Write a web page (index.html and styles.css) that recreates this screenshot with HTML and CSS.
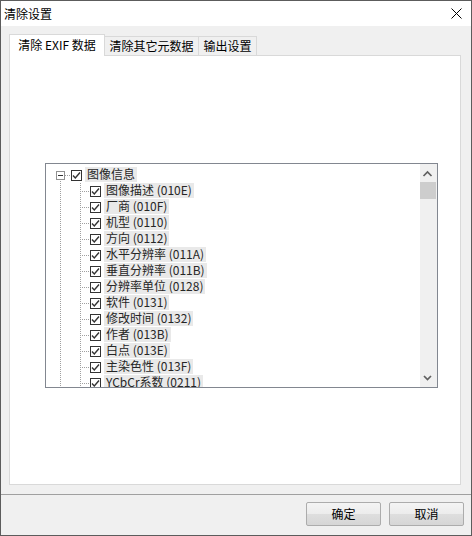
FILE: index.html
```html
<!DOCTYPE html>
<html lang="zh-CN">
<head>
<meta charset="utf-8">
<title>清除设置</title>
<link rel="stylesheet" href="styles.css">
</head>
<body>
<div class="window">
  <div class="titlebar">
    <span class="title">清除设置</span>
    <svg class="close" width="11" height="11" viewBox="0 0 11 11"><path d="M0.5 0.5 L10.5 10.5 M10.5 0.5 L0.5 10.5" stroke="#000" stroke-width="1" fill="none"/></svg>
  </div>
  <div class="body">
    <div class="tabs">
      <div class="tab active">清除 EXIF 数据</div>
      <div class="tab tab2">清除其它元数据</div>
      <div class="tab tab3">输出设置</div>
    </div>
    <div class="panel">
      <div class="tree">
        <div class="tree-list">
          <div class="row root">
            <span class="lead-root"><span class="expander"></span></span>
            <span class="cb"><svg width="9" height="9" viewBox="0 0 9 9"><path d="M1 4.5 L3.3 7 L8 1.5" stroke="#333" stroke-width="1.4" fill="none"/></svg></span>
            <span class="lbl">图像信息</span>
          </div>
          <div class="row child"><span class="lead"></span><span class="cb"><svg width="9" height="9" viewBox="0 0 9 9"><path d="M1 4.5 L3.3 7 L8 1.5" stroke="#333" stroke-width="1.4" fill="none"/></svg></span><span class="lbl">图像描述 (010E)</span></div>
          <div class="row child"><span class="lead"></span><span class="cb"><svg width="9" height="9" viewBox="0 0 9 9"><path d="M1 4.5 L3.3 7 L8 1.5" stroke="#333" stroke-width="1.4" fill="none"/></svg></span><span class="lbl">厂商 (010F)</span></div>
          <div class="row child"><span class="lead"></span><span class="cb"><svg width="9" height="9" viewBox="0 0 9 9"><path d="M1 4.5 L3.3 7 L8 1.5" stroke="#333" stroke-width="1.4" fill="none"/></svg></span><span class="lbl">机型 (0110)</span></div>
          <div class="row child"><span class="lead"></span><span class="cb"><svg width="9" height="9" viewBox="0 0 9 9"><path d="M1 4.5 L3.3 7 L8 1.5" stroke="#333" stroke-width="1.4" fill="none"/></svg></span><span class="lbl">方向 (0112)</span></div>
          <div class="row child"><span class="lead"></span><span class="cb"><svg width="9" height="9" viewBox="0 0 9 9"><path d="M1 4.5 L3.3 7 L8 1.5" stroke="#333" stroke-width="1.4" fill="none"/></svg></span><span class="lbl">水平分辨率 (011A)</span></div>
          <div class="row child"><span class="lead"></span><span class="cb"><svg width="9" height="9" viewBox="0 0 9 9"><path d="M1 4.5 L3.3 7 L8 1.5" stroke="#333" stroke-width="1.4" fill="none"/></svg></span><span class="lbl">垂直分辨率 (011B)</span></div>
          <div class="row child"><span class="lead"></span><span class="cb"><svg width="9" height="9" viewBox="0 0 9 9"><path d="M1 4.5 L3.3 7 L8 1.5" stroke="#333" stroke-width="1.4" fill="none"/></svg></span><span class="lbl">分辨率单位 (0128)</span></div>
          <div class="row child"><span class="lead"></span><span class="cb"><svg width="9" height="9" viewBox="0 0 9 9"><path d="M1 4.5 L3.3 7 L8 1.5" stroke="#333" stroke-width="1.4" fill="none"/></svg></span><span class="lbl">软件 (0131)</span></div>
          <div class="row child"><span class="lead"></span><span class="cb"><svg width="9" height="9" viewBox="0 0 9 9"><path d="M1 4.5 L3.3 7 L8 1.5" stroke="#333" stroke-width="1.4" fill="none"/></svg></span><span class="lbl">修改时间 (0132)</span></div>
          <div class="row child"><span class="lead"></span><span class="cb"><svg width="9" height="9" viewBox="0 0 9 9"><path d="M1 4.5 L3.3 7 L8 1.5" stroke="#333" stroke-width="1.4" fill="none"/></svg></span><span class="lbl">作者 (013B)</span></div>
          <div class="row child"><span class="lead"></span><span class="cb"><svg width="9" height="9" viewBox="0 0 9 9"><path d="M1 4.5 L3.3 7 L8 1.5" stroke="#333" stroke-width="1.4" fill="none"/></svg></span><span class="lbl">白点 (013E)</span></div>
          <div class="row child"><span class="lead"></span><span class="cb"><svg width="9" height="9" viewBox="0 0 9 9"><path d="M1 4.5 L3.3 7 L8 1.5" stroke="#333" stroke-width="1.4" fill="none"/></svg></span><span class="lbl">主染色性 (013F)</span></div>
          <div class="row child"><span class="lead"></span><span class="cb"><svg width="9" height="9" viewBox="0 0 9 9"><path d="M1 4.5 L3.3 7 L8 1.5" stroke="#333" stroke-width="1.4" fill="none"/></svg></span><span class="lbl">YCbCr系数 (0211)</span></div>
        </div>
        <div class="vscroll">
          <div class="sbtn"><svg width="17" height="17" viewBox="0 0 17 17"><path d="M3.5 12 L7.5 8 L11.5 12" stroke="#606060" stroke-width="1.7" fill="none"/></svg></div>
          <div class="thumb"></div>
          <div class="track"></div>
          <div class="sbtn"><svg width="17" height="17" viewBox="0 0 17 17"><path d="M4 6 L7.5 9.5 L11 6" stroke="#606060" stroke-width="1.7" fill="none"/></svg></div>
        </div>
      </div>
    </div>
  </div>
  <div class="footer">
    <button class="btn">确定</button>
    <button class="btn">取消</button>
  </div>
</div>
</body>
</html>
```

FILE: styles.css
```css
* { box-sizing: border-box; }
html, body { margin: 0; padding: 0; background: #ffffff; }
body {
  font-family: "Noto Sans CJK SC", "Noto Sans", sans-serif;
  font-size: 12px;
  color: #000;
}
.window {
  width: 472px;
  height: 536px;
  border: 1px solid #5c5c5c;
  display: flex;
  flex-direction: column;
  background: #f0f0f0;
}
.titlebar {
  height: 25px;
  flex: none;
  background: #ffffff;
  display: flex;
  align-items: center;
  justify-content: space-between;
  padding: 0 9px 0 3px;
}
.title { line-height: 16px; }
.close { display: block; }
.body {
  height: 468px;
  flex: none;
  padding: 8px 10px 9px 8px;
  display: flex;
  flex-direction: column;
}
.tabs {
  height: 21px;
  display: flex;
  align-items: flex-end;
  flex: none;
}
.tab {
  height: 19px;
  border: 1px solid #d9d9d9;
  border-bottom: none;
  background: #f0f0f0;
  text-align: center;
  line-height: 18px;
  white-space: nowrap;
}
.tab.active {
  width: 96px;
  height: 22px;
  margin-bottom: -1px;
  background: #ffffff;
  position: relative;
  z-index: 1;
  line-height: 20px;
}
.tab2 { width: 95px; margin-left: -1px; }
.tab3 { width: 59px; margin-left: -1px; }
.panel {
  height: 430px;
  flex: none;
  border: 1px solid #d9d9d9;
  background: #ffffff;
  padding: 107px 0 0 35px;
}
.tree {
  width: 393px;
  height: 225px;
  border: 1px solid #828790;
  display: flex;
  background: #fff;
}
.tree-list {
  flex: 1;
  overflow: hidden;
  padding-top: 3px;
}
.row {
  height: 16px;
  display: flex;
  align-items: flex-start;
  color: #262626;
}
.lead-root {
  width: 25px;
  height: 16px;
  flex: none;
  position: relative;
  background:
    repeating-linear-gradient(to right, #a0a0a0 0 1px, transparent 1px 2px) 19px 8px / 6px 1px no-repeat,
    repeating-linear-gradient(to bottom, #a0a0a0 0 1px, transparent 1px 2px) 14px 14px / 1px 2px no-repeat;
}
.expander {
  position: absolute;
  left: 10px;
  top: 4px;
  width: 9px;
  height: 9px;
  border: 1px solid #919191;
  background: #fff;
}
.expander::after {
  content: "";
  position: absolute;
  left: 1px;
  top: 3px;
  width: 5px;
  height: 1px;
  background: #333;
}
.lead {
  width: 44px;
  height: 16px;
  flex: none;
  background:
    repeating-linear-gradient(to bottom, #a0a0a0 0 1px, transparent 1px 2px) 14px 0 / 1px 16px no-repeat,
    repeating-linear-gradient(to bottom, #a0a0a0 0 1px, transparent 1px 2px) 34px 0 / 1px 16px no-repeat,
    repeating-linear-gradient(to right, #a0a0a0 0 1px, transparent 1px 2px) 36px 8px / 8px 1px no-repeat;
}
.cb {
  width: 11px;
  height: 11px;
  margin-top: 3px;
  flex: none;
  border: 1px solid #333;
  background: #fff;
  display: flex;
  align-items: center;
  justify-content: center;
}
.cb svg { display: block; }
.lbl {
  margin-left: 3px;
  height: 15px;
  line-height: 13px;
  padding: 0 2px;
  background: #e9e9e9;
  white-space: nowrap;
}
.vscroll {
  width: 17px;
  flex: none;
  background: #f0f0f0;
  display: flex;
  flex-direction: column;
}
.sbtn { height: 17px; flex: none; }
.sbtn svg { display: block; }
.thumb {
  height: 17px;
  margin: 1px 1px 0 0;
  background: #cdcdcd;
  flex: none;
}
.track { flex: 1; }
.footer {
  flex: 1;
  border-top: 1px solid #a0a0a0;
  background: #f0f0f0;
  display: flex;
  justify-content: flex-end;
  align-items: flex-start;
  gap: 8px;
  padding: 7px 7px 0 0;
}
.btn {
  width: 75px;
  height: 24px;
  border: 1px solid #acacac;
  border-radius: 2px;
  background: linear-gradient(#f4f4f4, #ececec 50%, #dedede 50%, #d6d6d6);
  font-family: "Noto Sans CJK SC", "Noto Sans", sans-serif;
  font-size: 12px;
  color: #000;
  padding: 0;
  line-height: 20px;
}
```
